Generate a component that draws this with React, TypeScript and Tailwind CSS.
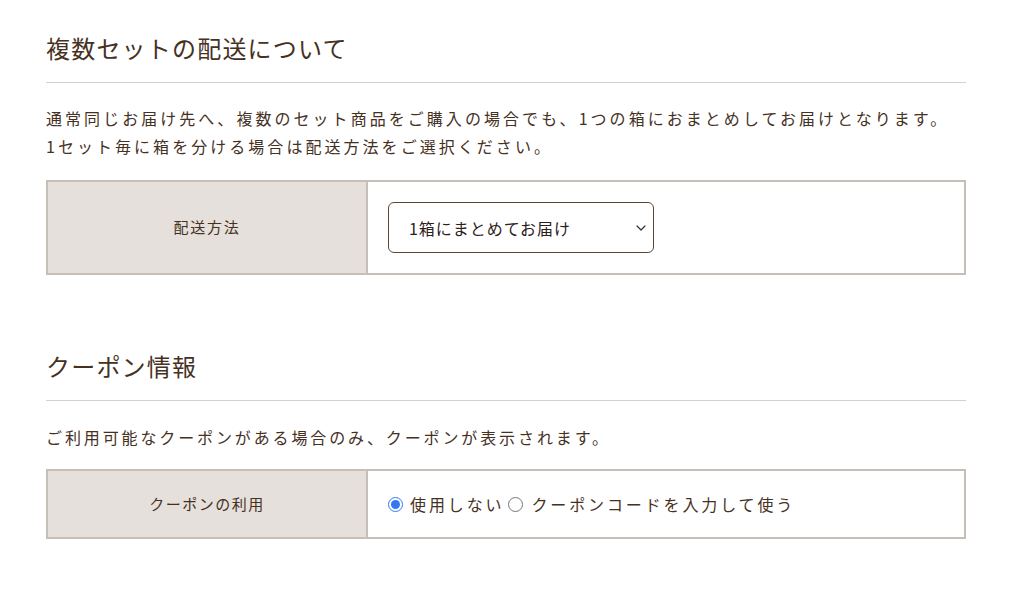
import React, { useState } from 'react';

const font = { fontFamily: '"Noto Sans CJK JP", "Noto Sans", sans-serif' };

const SectionTitle: React.FC<{ children: React.ReactNode }> = ({ children }) => (
  <h2 className="text-[24px] leading-[36px] tracking-[0.05em] text-[#46311f] pb-4 border-b border-[#d3d0cd]">
    {children}
  </h2>
);

const App: React.FC = () => {
  const [delivery, setDelivery] = useState('together');
  const [coupon, setCoupon] = useState('none');

  return (
    <div className="min-h-screen bg-white text-[#46311f]" style={font}>
      <div className="ml-[46px] w-[920px] pt-[30px]">
        <section>
          <SectionTitle>複数セットの配送について</SectionTitle>
          <p className="mt-[21px] text-base leading-[28px] tracking-[0.19em]">
            通常同じお届け先へ、複数のセット商品をご購入の場合でも、1つの箱におまとめしてお届けとなります。
            <br />
            1セット毎に箱を分ける場合は配送方法をご選択ください。
          </p>
          <div className="mt-5 flex border-2 border-[#c6bfb8]">
            <div className="w-[320px] shrink-0 bg-[#e5e0db] border-r-2 border-[#c6bfb8] flex items-center justify-center text-[15px] tracking-[0.12em]">
              配送方法
            </div>
            <div className="flex-1 px-5 py-5">
              <div className="relative w-[266px]">
                <select
                  value={delivery}
                  onChange={e => setDelivery(e.target.value)}
                  className="appearance-none w-full h-[51px] rounded-[6px] border border-[#5c4634] bg-white pl-5 pr-8 text-base tracking-[0.06em] text-[#2b211a] outline-none"
                  style={font}
                >
                  <option value="together">1箱にまとめてお届け</option>
                  <option value="separate">1セット毎に箱を分けてお届け</option>
                </select>
                <svg
                  className="pointer-events-none absolute right-[8px] top-1/2 -translate-y-1/2"
                  width="10"
                  height="7"
                  viewBox="0 0 10 7"
                  fill="none"
                >
                  <path d="M1 1.5 L5 5.5 L9 1.5" stroke="#333" strokeWidth="1.2" strokeLinecap="round" strokeLinejoin="round" />
                </svg>
              </div>
            </div>
          </div>
        </section>

        <section className="mt-[73px]">
          <SectionTitle>クーポン情報</SectionTitle>
          <p className="mt-[22px] text-base leading-[28px] tracking-[0.18em]">
            ご利用可能なクーポンがある場合のみ、クーポンが表示されます。
          </p>
          <div className="mt-[18px] flex h-[70px] border-2 border-[#c6bfb8]">
            <div className="w-[320px] shrink-0 bg-[#e5e0db] border-r-2 border-[#c6bfb8] flex items-center justify-center text-[15px] tracking-[0.1em]">
              クーポンの利用
            </div>
            <div className="flex-1 flex items-center pl-5 text-base tracking-[0.18em] text-[#46311f]">
              <label className="flex items-center gap-[7px] cursor-pointer">
                <input
                  type="radio"
                  name="coupon"
                  checked={coupon === 'none'}
                  onChange={() => setCoupon('none')}
                  className="m-0 w-[15px] h-[15px] accent-[#3478f6]"
                />
                <span>使用しない</span>
              </label>
              <label className="ml-[4px] flex items-center gap-[8px] cursor-pointer">
                <input
                  type="radio"
                  name="coupon"
                  checked={coupon === 'code'}
                  onChange={() => setCoupon('code')}
                  className="m-0 w-[15px] h-[15px] accent-[#3478f6]"
                />
                <span>クーポンコードを入力して使う</span>
              </label>
            </div>
          </div>
        </section>
      </div>
    </div>
  );
};

export default App;
